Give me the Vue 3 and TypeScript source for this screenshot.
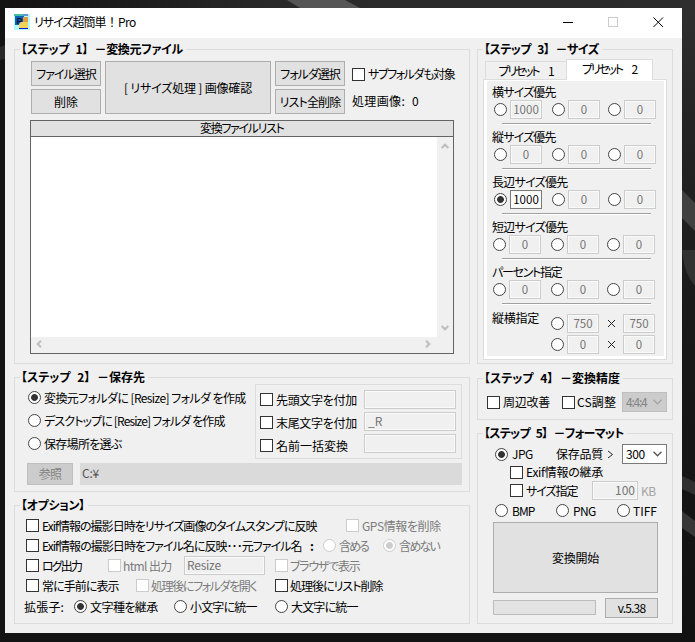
<script setup lang="ts">
import { reactive, ref } from 'vue'
import type { Directive } from 'vue'

// Spaces the glyphs of a label evenly so that it fills the given width.
const vFit: Directive<HTMLElement, number> = {
  mounted(el, { value }) {
    const natural = el.getBoundingClientRect().width
    const count = Array.from(el.textContent ?? '').length
    if (count > 1) {
      el.style.letterSpacing = `${(value - natural) / (count - 0.5)}px`
    }
    el.style.width = `${value}px`
  },
}

interface SizeRow {
  title: string
  width: number
  values: number[]
  shifted?: boolean
}

const sizeRows: SizeRow[] = [
  { title: '横サイズ優先', width: 64, values: [1000, 0, 0] },
  { title: '縦サイズ優先', width: 64, values: [0, 0, 0] },
  { title: '長辺サイズ優先', width: 76, values: [1000, 0, 0] },
  { title: '短辺サイズ優先', width: 76, values: [0, 0, 0], shifted: true },
  { title: 'パーセント指定', width: 70, values: [0, 0, 0], shifted: true },
]
const selected = ref('2-0')
const pairs = [750, 0]

const names = reactive([
  { label: '先頭文字を付加', width: 81, text: '', on: false },
  { label: '末尾文字を付加', width: 81, text: '_R', on: false },
  { label: '名前一括変換', width: 72, text: '', on: false },
])
const destination = ref(0)
const destinations = [
  { label: '変換元フォルダに [Resize] フォルダ を作成', width: 202 },
  { label: 'デスクトップに [Resize] フォルダ を作成', width: 181 },
  { label: '保存場所を選ぶ', width: 78 },
]
</script>

<template>
  <div class="desktop">
    <svg class="wall" width="695" height="642" viewBox="0 0 695 642">
      <defs>
        <linearGradient id="wg" x1="0" x2="1" y1="0" y2="0">
          <stop offset="0" stop-color="#131313" />
          <stop offset=".4" stop-color="#292929" />
          <stop offset="1" stop-color="#2b2b2b" />
        </linearGradient>
        <linearGradient id="wr" x1="0" x2="0" y1="0" y2="1">
          <stop offset="0" stop-color="#303030" />
          <stop offset=".2" stop-color="#242424" />
          <stop offset=".5" stop-color="#191919" />
          <stop offset="1" stop-color="#121212" />
        </linearGradient>
      </defs>
      <rect width="695" height="642" fill="#131313" />
      <rect width="695" height="10" fill="url(#wg)" />
      <rect x="680" width="15" height="642" fill="url(#wr)" />
      <path d="M287 0H345L360 8H300Z" fill="#555" />
      <path d="M682 190L695 203V231L682 218Z" fill="#414141" />
      <path d="M682 250Q684 274 695 286V250Z" fill="#323232" />
      <path d="M682 476L695 482V495L682 489Z" fill="#303030" />
      <path d="M682 511L695 521V537L682 528Z" fill="#383838" />
      <path d="M0 47L5 45V59L0 60Z" fill="#292929" />
    </svg>

    <main class="window">
      <header class="titlebar">
        <svg class="logo" width="16" height="16" viewBox="0 0 16 16">
          <rect width="16" height="16" fill="#b4fbfb" />
          <rect x="1" y="2" width="9" height="9" fill="#0c62b8" />
          <rect x="9" y="3" width="5" height="5" fill="#e39a3c" />
          <path d="M5 14V10L7 8H14V14Z" fill="#f4d35c" />
          <path d="M0 1H9" stroke="#12a87c" stroke-width="1.4" />
          <path d="M9 1H14" stroke="#1226c8" />
          <path d="M5 14.5H14" stroke="#0018d8" />
          <text x="2.5" y="9.5" class="logo-text">P</text>
        </svg>
        <span v-fit="72" class="caption">リサイズ超簡単</span><span class="caption bang">！</span><span v-fit="18" class="caption">Pro</span>
        <svg class="controls" width="102" height="12" viewBox="0 0 102 12">
          <path d="M1 5.5H11" stroke="#000" />
          <rect x="46.5" y=".5" width="9" height="9" fill="none" stroke="#ccc" />
          <path d="M91.5 .5L101 10M101 .5L91.5 10" stroke="#000" />
        </svg>
      </header>

      <div class="client">
        <div class="column left">
          <section class="group source">
            <h2><span v-fit="162">【ステップ 1】 －変換元ファイル</span></h2>
            <div class="source-actions">
              <div class="stack">
                <button><span v-fit="60">ファイル選択</span></button>
                <button><span v-fit="24">削除</span></button>
              </div>
              <button class="confirm"><span v-fit="128">[ リサイズ処理 ] 画像確認</span></button>
              <div class="stack">
                <button><span v-fit="60">フォルダ選択</span></button>
                <button><span v-fit="61">リスト全削除</span></button>
              </div>
              <div class="stack info">
                <label><i class="cb"></i><span v-fit="87">サブフォルダも対象</span></label>
                <p><span v-fit="53">処理画像:</span><span class="zero">0</span></p>
              </div>
            </div>
            <div class="list">
              <div class="list-head"><span v-fit="84">変換ファイルリスト</span></div>
              <div class="list-main">
                <div class="list-body"></div>
                <div class="vbar">
                  <svg width="8" height="6" viewBox="0 0 8 6"><path d="M.7 5L4 1.7L7.3 5" /></svg>
                  <svg width="8" height="6" viewBox="0 0 8 6"><path d="M.7 1L4 4.3L7.3 1" /></svg>
                </div>
              </div>
              <div class="hbar">
                <svg width="6" height="8" viewBox="0 0 6 8"><path d="M5 .7L1.7 4L5 7.3" /></svg>
                <svg width="6" height="8" viewBox="0 0 6 8"><path d="M1 .7L4.3 4L1 7.3" /></svg>
              </div>
            </div>
          </section>

          <section class="group target">
            <h2><span v-fit="124">【ステップ 2】 －保存先</span></h2>
            <div class="target-top">
              <div class="places">
                <label v-for="(d, i) in destinations" :key="i" @click="destination = i">
                  <i class="rd" :class="{ on: destination === i }"></i><span v-fit="d.width">{{ d.label }}</span>
                </label>
              </div>
              <div class="naming">
                <div class="name-checks">
                  <label v-for="n in names" :key="n.label" @click="n.on = !n.on">
                    <i class="cb"></i><span v-fit="n.width">{{ n.label }}</span>
                  </label>
                </div>
                <div class="name-fields">
                  <div v-for="n in names" :key="n.label" class="field wide">{{ n.text }}</div>
                </div>
              </div>
            </div>
            <div class="path-row">
              <button class="off"><span v-fit="23">参照</span></button>
              <div class="path"><span v-fit="17">C:¥</span></div>
            </div>
          </section>

          <section class="group options">
            <h2><span v-fit="64">【オプション】</span></h2>
            <div class="row">
              <i class="cb"></i><span v-fit="275">Exif情報の撮影日時をリサイズ画像のタイムスタンプに反映</span>
              <i class="cb dim gps"></i><span v-fit="79" class="grey">GPS情報を削除</span>
            </div>
            <div class="row">
              <i class="cb"></i><span v-fit="260">Exif情報の撮影日時をファイル名に反映･･･元ファイル名</span>
              <span class="colon">:</span>
              <i class="rd dim inc"></i><span v-fit="30" class="grey">含める</span>
              <i class="rd dim on exc"></i><span v-fit="41" class="grey">含めない</span>
            </div>
            <div class="row">
              <i class="cb"></i><span v-fit="40">ログ出力</span>
              <i class="cb dim html"></i><span v-fit="49" class="grey">html 出力</span>
              <div class="field suffix"><span v-fit="34">Resize</span></div>
              <i class="cb dim browser"></i><span v-fit="70" class="grey">ブラウザで表示</span>
            </div>
            <div class="row">
              <i class="cb"></i><span v-fit="77">常に手前に表示</span>
              <i class="cb dim folder"></i><span v-fit="106" class="grey">処理後にフォルダを開く</span>
              <i class="cb cleared"></i><span v-fit="93">処理後にリスト削除</span>
            </div>
            <div class="row ext">
              <span v-fit="40">拡張子:</span>
              <i class="rd on keep"></i><span v-fit="68">文字種を継承</span>
              <i class="rd lower"></i><span v-fit="67">小文字に統一</span>
              <i class="rd upper"></i><span v-fit="67">大文字に統一</span>
            </div>
          </section>
        </div>

        <div class="column right">
          <section class="group sizes">
            <h2><span v-fit="115">【ステップ 3】 －サイズ</span></h2>
            <nav class="tabs">
              <div class="tab"><span v-fit="55">プリセット　1</span></div>
              <div class="tab active"><span v-fit="55">プリセット　2</span></div>
            </nav>
            <div class="panel">
              <div v-for="(row, r) in sizeRows" :key="r" class="size" :class="{ shifted: row.shifted }">
                <h3><span v-fit="row.width">{{ row.title }}</span></h3>
                <div class="choices">
                  <label v-for="(v, c) in row.values" :key="c" @click="selected = `${r}-${c}`">
                    <i class="rd" :class="{ on: selected === `${r}-${c}` }"></i>
                    <b class="field num" :class="{ live: selected === `${r}-${c}` }">{{ v }}</b>
                  </label>
                </div>
                <hr />
              </div>
              <div class="both">
                <h3><span v-fit="47">縦横指定</span></h3>
                <div class="pairs">
                  <label v-for="(v, i) in pairs" :key="i">
                    <i class="rd"></i><b class="field num">{{ v }}</b>
                    <svg width="9" height="9" viewBox="0 0 9 9"><path d="M1 1L8 8M8 1L1 8" /></svg>
                    <b class="field num">{{ v }}</b>
                  </label>
                </div>
              </div>
            </div>
          </section>

          <section class="group precision">
            <h2><span v-fit="136">【ステップ 4】 －変換精度</span></h2>
            <div class="row">
              <i class="cb"></i><span v-fit="47">周辺改善</span>
              <i class="cb cs"></i><span v-fit="39">CS調整</span>
              <div class="combo off">
                <span v-fit="21">4:4:4</span>
                <svg width="9" height="6" viewBox="0 0 9 6"><path d="M.5 .8L4.5 4.8L8.5 .8" /></svg>
              </div>
            </div>
          </section>

          <section class="group format">
            <h2><span v-fit="140">【ステップ 5】 －フォーマット</span></h2>
            <div class="row jpg">
              <i class="rd on"></i><span v-fit="21">JPG</span>
              <span v-fit="47" class="quality">保存品質</span>
              <svg class="gt" width="7" height="9" viewBox="0 0 7 9"><path d="M1 1L5.5 4.5L1 8" /></svg>
              <div class="combo">
                <span v-fit="19">300</span>
                <svg width="9" height="6" viewBox="0 0 9 6"><path d="M.5 .8L4.5 4.8L8.5 .8" /></svg>
              </div>
            </div>
            <div class="row inherit"><i class="cb"></i><span v-fit="77">Exif情報の継承</span></div>
            <div class="row limit">
              <i class="cb"></i><span v-fit="52">サイズ指定</span>
              <div class="field kb">100</div><span v-fit="15" class="pale">KB</span>
            </div>
            <div class="row types">
              <i class="rd"></i><span v-fit="23">BMP</span>
              <i class="rd png"></i><span v-fit="23">PNG</span>
              <i class="rd tiff"></i><span v-fit="24">TIFF</span>
            </div>
            <button class="start"><span v-fit="47">変換開始</span></button>
            <footer>
              <div class="progress"></div>
              <button><span v-fit="28">v.5.38</span></button>
            </footer>
          </section>
        </div>
      </div>
    </main>
  </div>
</template>

<style>
body {
  margin: 0;
  overflow: hidden;
}
</style>

<style scoped>
* {
  box-sizing: border-box;
}
.desktop {
  position: relative;
  width: 695px;
  height: 642px;
  padding: 8px 13px 9px 5px;
  background: #131313;
  font: 12px/14px 'Noto Sans CJK JP', 'Liberation Sans', sans-serif;
  font-feature-settings: 'palt';
  color: #000;
}
.wall {
  position: absolute;
  left: 0;
  top: 0;
}
.window {
  position: relative;
  width: 677px;
  height: 625px;
  background: #f0f0f0;
}
span {
  display: inline-block;
  flex: none;
  white-space: nowrap;
}
h2,
h3,
p {
  margin: 0;
  font-size: 12px;
  font-weight: normal;
}
.titlebar {
  display: flex;
  align-items: center;
  height: 30px;
  padding: 0 18px 0 9px;
  background: #fff;
}
.logo {
  margin: -3px 4px 0 0;
}
.logo-text {
  font: bold 9px 'Liberation Sans', sans-serif;
  fill: #04123c;
}
.caption {
  margin-top: -2px;
}
.bang {
  width: 12px;
  text-align: center;
}
.controls {
  margin: -1px 0 0 auto;
}
.client {
  display: flex;
  gap: 7px;
  padding: 11px 9px 9px;
}
.column {
  display: flex;
  flex-direction: column;
}
.left {
  width: 456px;
  gap: 13px;
}
.right {
  width: 196px;
}
.group {
  position: relative;
  border: 1px solid #dcdcdc;
}
h2 {
  position: absolute;
  top: -9px;
  left: 5px;
  padding: 0 3px 0 1px;
  font-weight: bold;
  line-height: 16px;
  word-spacing: 4px;
  background: #f0f0f0;
}
h2 span {
  display: block;
}
button {
  display: flex;
  align-items: center;
  justify-content: center;
  padding: 0;
  border: 1px solid #adadad;
  background: #e1e1e1;
  font: inherit;
  font-feature-settings: inherit;
  color: inherit;
}
button.off {
  border-color: #bfbfbf;
  background: #ccc;
  color: #838383;
}
label {
  display: flex;
  align-items: center;
}
.cb,
.rd {
  flex: none;
  width: 13px;
  height: 13px;
  margin-right: 3px;
  border: 1px solid #333;
  background: #fff;
}
.rd {
  border-color: #444;
  border-radius: 50%;
}
.rd.on {
  background: radial-gradient(circle, #333 0 3px, #fff 3.8px);
}
.cb.dim,
.rd.dim {
  border-color: #ccc;
}
.rd.dim.on {
  background: radial-gradient(circle, #ccc 0 3px, #fff 3.8px);
}
.grey {
  color: #7b7b7b;
}
.pale {
  color: #a4a4a4;
}
.field {
  flex: none;
  height: 19px;
  border: 1px solid #ccc;
  box-shadow: inset 0 0 0 1px #fafafa;
  font-weight: normal;
  line-height: 15px;
  color: #747474;
}
.field.wide {
  width: 92px;
  padding-left: 3px;
}
.field.num {
  width: 32px;
  font-size: 11.5px;
  text-align: center;
  line-height: 16px;
}
.field.live {
  border-color: #7a7a7a;
  background: #fff;
  color: #000;
}
.row {
  display: flex;
  align-items: center;
  height: 19px;
}

.source {
  height: 315px;
  padding: 11px 0 0 15px;
}
.source-actions {
  display: flex;
  gap: 4px;
  height: 53px;
  padding-left: 1px;
}
.stack {
  display: flex;
  flex-direction: column;
  gap: 3px;
}
.stack button {
  width: 70px;
  height: 25px;
}
.source-actions .confirm {
  width: 166px;
}
.stack.info {
  margin-left: 3px;
  gap: 13px;
  padding-top: 6px;
}
.info p {
  display: flex;
}
.info label {
  height: 14px;
}
.zero {
  margin-left: 7px;
}
.list {
  display: flex;
  flex-direction: column;
  width: 424px;
  height: 234px;
  margin-top: 6px;
  border: 1px solid #646464;
}
.list-head {
  display: flex;
  justify-content: center;
  height: 16px;
  border-bottom: 1px solid #646464;
  background: #e1e1e1;
}
.list-main {
  display: flex;
  flex: 1;
}
.list-body {
  flex: 1;
  background: #fff;
}
.vbar {
  display: flex;
  flex-direction: column;
  justify-content: space-between;
  align-items: center;
  width: 16px;
  padding: 6px 0;
}
.hbar {
  display: flex;
  justify-content: space-between;
  align-items: center;
  height: 16px;
  padding: 0 22px 2px 5px;
}
.vbar path,
.hbar path {
  fill: none;
  stroke: #bdbdbd;
  stroke-width: 2;
}

.target {
  height: 115px;
  padding-top: 6px;
}
.target-top {
  display: flex;
  height: 75px;
}
.places {
  display: flex;
  flex-direction: column;
  gap: 4px;
  width: 240px;
  padding: 4px 0 0 13px;
}
.places label,
.name-checks label {
  height: 19px;
}
.naming {
  display: flex;
  width: 207px;
  padding: 5px 0 0 4px;
  border: 1px solid #dcdcdc;
}
.name-checks {
  display: flex;
  flex-direction: column;
  gap: 4px;
  width: 104px;
}
.name-fields {
  display: flex;
  flex-direction: column;
  gap: 3px;
}
.path-row {
  display: flex;
  gap: 7px;
  margin-top: 4px;
  padding-left: 12px;
}
.path-row button {
  width: 46px;
  height: 22px;
}
.path {
  width: 382px;
  height: 22px;
  padding: 3px 0 0 2px;
  background: #dadada;
  color: #555;
}

.options {
  display: flex;
  flex-direction: column;
  gap: 1px;
  height: 119px;
  padding: 10px 0 0 11px;
}
.gps {
  margin-left: 29px;
}
.colon {
  width: 5px;
  margin-left: 8px;
  font-weight: bold;
}
.inc {
  margin-left: 8px;
}
.exc {
  margin-left: 14px;
}
.html {
  margin-left: 26px;
  margin-right: 2px;
}
.suffix {
  width: 81px;
  margin-left: 12px;
  padding-left: 2px;
}
.browser {
  margin-left: 10px;
  margin-right: 2px;
}
.folder {
  margin-left: 17px;
  margin-right: 2px;
}
.cleared {
  margin-left: 18px;
  margin-right: 2px;
}
.ext {
  margin: 1px 0 0 -2px;
}
.keep {
  margin-left: 10px;
}
.lower {
  margin-left: 16px;
}
.upper {
  margin-left: 18px;
}

.sizes {
  height: 315px;
  padding: 9px 0 0 5px;
}
.tabs {
  display: flex;
  align-items: flex-end;
  height: 20px;
  padding-left: 2px;
}
.tab {
  display: flex;
  justify-content: center;
  width: 81px;
  height: 18px;
  padding-top: 2px;
  border: 1px solid #dcdcdc;
  border-width: 1px 0 0 1px;
}
.tab.active {
  position: relative;
  width: 87px;
  height: 21px;
  margin-bottom: -1px;
  border-width: 1px 1px 0;
  background: #fff;
}
.panel {
  width: 184px;
  height: 281px;
  padding: 4px 0 0 8px;
  border: 1px solid #dcdcdc;
  box-shadow: inset 3px 1px #fff, inset -2px -3px #fff;
}
.size {
  height: 45px;
}
h3 {
  height: 16px;
  line-height: 15px;
}
.choices {
  display: flex;
  padding-left: 2px;
}
.choices label + label {
  margin-left: 10px;
}
.choices label + label + label {
  margin-left: 8px;
}
.shifted .choices {
  padding-left: 1px;
}
hr {
  width: 149px;
  height: 2px;
  margin: 4px 0 0 10px;
  border: 0;
  border-top: 1px solid #a0a0a0;
  background: #fff;
}
.both {
  display: flex;
  justify-content: space-between;
  padding: 5px 11px 0 0;
}
.both h3 {
  margin-top: -4px;
}
.pairs {
  display: flex;
  flex-direction: column;
  gap: 2px;
}
.pairs svg {
  margin: 0 7px 0 8px;
}
.pairs path,
.gt path {
  fill: none;
  stroke: #222;
}

.precision {
  height: 42px;
  margin-top: 14px;
  padding: 13px 0 0 9px;
}
.precision .row {
  height: 20px;
}
.cs {
  margin-left: 12px;
  margin-right: 2px;
}
.combo {
  display: flex;
  align-items: center;
  justify-content: space-between;
  width: 45px;
  height: 20px;
  margin-left: auto;
  padding: 0 4px 1px 3px;
  border: 1px solid #7a7a7a;
  background: #fff;
}
.row .combo {
  margin-right: 5px;
}
.combo.off {
  border-color: #bfbfbf;
  background: #ccc;
  color: #838383;
}
.combo path {
  fill: none;
  stroke: #555;
  stroke-width: 1.3;
}
.combo.off path {
  stroke: #a5a5a5;
}
.format {
  height: 191px;
  margin-top: 13px;
  padding: 10px 0 0 15px;
}
.format .row {
  margin-left: 2px;
}
.format .jpg {
  height: 20px;
}
.jpg .rd {
  margin-right: 4px;
}
.quality {
  margin-left: 23px;
}
.gt {
  margin-left: 4px;
}
.format .inherit {
  height: 17px;
  margin-left: 17px;
  padding-bottom: 1px;
}
.format .limit {
  margin-left: 17px;
}
.field.kb {
  width: 46px;
  margin: 0 3px 0 14px;
  padding-right: 2px;
  text-align: right;
  line-height: 16px;
}
.format .types {
  margin-top: 1px;
}
.types .rd {
  margin-right: 4px;
}
.types .png {
  margin-left: 21px;
}
.types .tiff {
  margin-left: 21px;
  margin-right: 3px;
}
.start {
  width: 165px;
  height: 71px;
  margin-top: 2px;
}
footer {
  display: flex;
  align-items: center;
  gap: 9px;
  margin-top: 5px;
}
.progress {
  width: 103px;
  height: 15px;
  margin-top: -1px;
  border: 1px solid #bcbcbc;
  background: #e3e3e3;
}
footer button {
  width: 53px;
  height: 20px;
}
</style>
